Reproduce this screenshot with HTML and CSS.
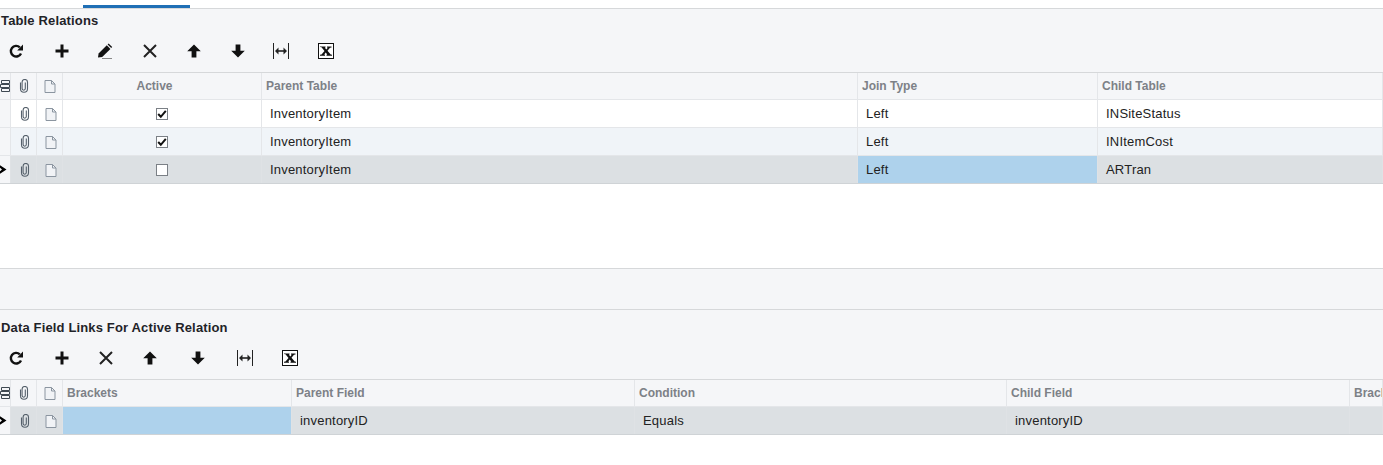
FILE: index.html
```html
<!DOCTYPE html>
<html lang="en">
<head>
<meta charset="utf-8">
<title>Table Relations</title>
<link rel="stylesheet" href="styles.css">
</head>
<body>
<svg class="defs" width="0" height="0" aria-hidden="true">
  <symbol id="i-refresh" viewBox="0 0 16 16"><path d="M13 10.400A5.300 5.300 0 1 1 11.800 4.300" fill="none" stroke="#111" stroke-width="2.400"/><path d="M9.200 7.400h5.800V1.600z" fill="#111"/></symbol>
  <symbol id="i-plus" viewBox="0 0 16 16"><path d="M6.500 1.500h3v5h5v3h-5v5h-3v-5h-5v-3h5z" fill="#111"/></symbol>
  <symbol id="i-edit" viewBox="0 0 16 16"><path d="M1 14.500l.6-4L9.800 2.300l3.600 3.600-8.200 8.200z" fill="#111"/><path d="M10.600 1.500l1-1 3.600 3.600-1 1z" fill="#111"/><path d="M5 15.500h10" stroke="#888" stroke-width="1"/></symbol>
  <symbol id="i-x" viewBox="0 0 16 16"><path d="M2 2l12 12M14 2L2 14" stroke="#222" stroke-width="2" fill="none"/></symbol>
  <symbol id="i-up" viewBox="0 0 16 16"><path d="M8 1.500l6.800 6.800H10.400v6.200H5.600V8.300H1.200z" fill="#111"/></symbol>
  <symbol id="i-down" viewBox="0 0 16 16"><path d="M8 14.500l6.800-6.800H10.400V1.500H5.600v6.200H1.200z" fill="#111"/></symbol>
  <symbol id="i-fit" viewBox="0 0 16 16"><path d="M.5 0v16M15.500 0v16" stroke="#222" stroke-width="1" fill="none"/><path d="M4 8h8" stroke="#222" stroke-width="1.600"/><path d="M2 8l3.500-3.500v7zM14 8l-3.500-3.500v7z" fill="#222"/></symbol>
  <symbol id="i-excel" viewBox="0 0 16 16"><rect x=".5" y=".5" width="15" height="15" fill="#fff" stroke="#111"/><path d="M2 3.500h5.500v1l-.6.200L8.300 6.600 9.800 4.700 9 4.500v-1h4.500v1l-1.500.3L9.500 7.800l3.200 3.700 1.300.200v1H8.500v-1l.7-.2-1.400-2-1.600 2 .8.200v1H2v-1l1.500-.2 3-3.500-3-3.800-1.500-.3z" fill="#111"/></symbol>
  <symbol id="i-clip" viewBox="0 0 10 14"><path d="M1.500 3.500v6.300a3.500 3.500 0 0 0 7 0V3.200a2.700 2.700 0 0 0-5.400-.1v6.500a1.600 1.600 0 0 0 3.200 0V3.500" fill="none" stroke="#55606b" stroke-width="1.100"/></symbol>
  <symbol id="i-doc" viewBox="0 0 12 14"><path d="M1 1.500h6.500L11 5v8.500H1z" fill="#f1f3f6" stroke="#8b95a0"/><path d="M7.500 1.500V5H11" fill="none" stroke="#8b95a0"/></symbol>
  <symbol id="i-list" viewBox="0 0 10 14"><path d="M1.500 1.500h8v3h-8zM.5 5.500h9v3h-9zM1.500 9.500h8v3h-8z" fill="none" stroke="#3f4952"/></symbol>
  <symbol id="i-caret" viewBox="0 0 7 9"><path d="M0 .2v2.600L2 4.500 0 6.200v2.600l6.500-4.300z" fill="#000"/></symbol>
  <symbol id="i-check" viewBox="0 0 10 10"><path d="M1.200 5l2.600 2.800L8.800 1.800" fill="none" stroke="#111" stroke-width="2"/></symbol>
</svg>

<div class="tabstrip"><span class="tab-active"></span></div>

<section class="panel">
  <h2 class="panel-title">Table Relations</h2>
  <div class="toolbar">
    <svg class="tb tb-1"><use href="#i-refresh"/></svg>
    <svg class="tb tb-2"><use href="#i-plus"/></svg>
    <svg class="tb tb-3"><use href="#i-edit"/></svg>
    <svg class="tb tb-4"><use href="#i-x"/></svg>
    <svg class="tb tb-5"><use href="#i-up"/></svg>
    <svg class="tb tb-6"><use href="#i-down"/></svg>
    <svg class="tb tb-7"><use href="#i-fit"/></svg>
    <svg class="tb tb-8"><use href="#i-excel"/></svg>
  </div>
</section>

<div class="grid grid-top">
  <div class="row head">
    <div class="c c-ind"><svg class="i-list"><use href="#i-list"/></svg></div>
    <div class="c c-ico"><svg class="i-clip"><use href="#i-clip"/></svg></div>
    <div class="c c-ico"><svg class="i-doc"><use href="#i-doc"/></svg></div>
    <div class="c c-center c-active-head">Active</div>
    <div class="c">Parent Table</div>
    <div class="c">Join Type</div>
    <div class="c">Child Table</div>
  </div>
  <div class="row">
    <div class="c c-ind"></div>
    <div class="c c-ico"><svg class="i-clip"><use href="#i-clip"/></svg></div>
    <div class="c c-ico"><svg class="i-doc"><use href="#i-doc"/></svg></div>
    <div class="c c-center"><span class="check"><svg class="i-check"><use href="#i-check"/></svg></span></div>
    <div class="c">InventoryItem</div>
    <div class="c">Left</div>
    <div class="c">INSiteStatus</div>
  </div>
  <div class="row alt">
    <div class="c c-ind"></div>
    <div class="c c-ico"><svg class="i-clip"><use href="#i-clip"/></svg></div>
    <div class="c c-ico"><svg class="i-doc"><use href="#i-doc"/></svg></div>
    <div class="c c-center"><span class="check"><svg class="i-check"><use href="#i-check"/></svg></span></div>
    <div class="c">InventoryItem</div>
    <div class="c">Left</div>
    <div class="c">INItemCost</div>
  </div>
  <div class="row current">
    <div class="c c-ind"><svg class="i-caret"><use href="#i-caret"/></svg></div>
    <div class="c c-ico"><svg class="i-clip"><use href="#i-clip"/></svg></div>
    <div class="c c-ico"><svg class="i-doc"><use href="#i-doc"/></svg></div>
    <div class="c c-center"><span class="check"></span></div>
    <div class="c">InventoryItem</div>
    <div class="c c-active">Left</div>
    <div class="c">ARTran</div>
  </div>
</div>

<div class="grid-space"></div>
<div class="splitter"></div>

<section class="panel panel-lower">
  <h2 class="panel-title">Data Field Links For Active Relation</h2>
  <div class="toolbar">
    <svg class="tb tb-1"><use href="#i-refresh"/></svg>
    <svg class="tb tb-2"><use href="#i-plus"/></svg>
    <svg class="tb tb-b3"><use href="#i-x"/></svg>
    <svg class="tb tb-b4"><use href="#i-up"/></svg>
    <svg class="tb tb-b5"><use href="#i-down"/></svg>
    <svg class="tb tb-b6"><use href="#i-fit"/></svg>
    <svg class="tb tb-b7"><use href="#i-excel"/></svg>
  </div>
</section>

<div class="grid grid-bottom">
  <div class="row head">
    <div class="c c-ind"><svg class="i-list"><use href="#i-list"/></svg></div>
    <div class="c c-ico"><svg class="i-clip"><use href="#i-clip"/></svg></div>
    <div class="c c-ico"><svg class="i-doc"><use href="#i-doc"/></svg></div>
    <div class="c">Brackets</div>
    <div class="c">Parent Field</div>
    <div class="c">Condition</div>
    <div class="c">Child Field</div>
    <div class="c">Brackets</div>
  </div>
  <div class="row current">
    <div class="c c-ind"><svg class="i-caret"><use href="#i-caret"/></svg></div>
    <div class="c c-ico"><svg class="i-clip"><use href="#i-clip"/></svg></div>
    <div class="c c-ico"><svg class="i-doc"><use href="#i-doc"/></svg></div>
    <div class="c c-active"></div>
    <div class="c">inventoryID</div>
    <div class="c">Equals</div>
    <div class="c">inventoryID</div>
    <div class="c"></div>
  </div>
</div>
</body>
</html>
```

FILE: styles.css
```css
* { box-sizing: border-box; margin: 0; padding: 0; }
html, body { height: 100%; overflow: hidden; }
body { background: #fff; font-family: "Liberation Sans", Arial, sans-serif; font-size: 13px; color: #222; }
.defs { position: absolute; }

.tabstrip { height: 9px; border-bottom: 1px solid #d6d8da; padding-left: 83px; display: flex; align-items: flex-end; }
.tab-active { display: block; width: 107px; height: 3px; background: #1f6fb5; }

.panel { background: #f5f6f8; height: 63px; display: flex; flex-direction: column; }
.panel-lower { height: 69px; padding-top: 6px; }
.panel-title { font-size: 13px; font-weight: bold; line-height: 14px; padding: 5px 0 0 1px; color: #1f2328; letter-spacing: .15px; }
.toolbar { position: relative; flex: 1; }
.tb { position: absolute; top: 15px; width: 16px; height: 16px; }
.tb-1 { left: 8px; } .tb-2 { left: 54px; } .tb-3 { left: 97px; } .tb-4 { left: 142px; }
.tb-5 { left: 186px; } .tb-6 { left: 230px; } .tb-7 { left: 273px; } .tb-8 { left: 318px; }
.tb-b3 { left: 98px; } .tb-b4 { left: 142px; } .tb-b5 { left: 190px; } .tb-b6 { left: 237px; } .tb-b7 { left: 282px; }

.row { display: grid; height: 28px; border-bottom: 1px solid #e4e6e9; align-items: stretch; }
.grid-top .row { grid-template-columns: 11px 26px 26px 199px 596px 240px 1fr; }
.grid-bottom .row { grid-template-columns: 11px 26px 26px 229px 343px 372px 343px 1fr; }
.c { display: flex; align-items: center; padding-left: 8px; border-right: 1px solid #e4e6e9; line-height: 14px; letter-spacing: .2px; white-space: nowrap; overflow: hidden; min-width: 0; }
.c-ind { padding: 0; background: #f5f6f8; overflow: visible; }
.c-ico { padding: 0 0 0 2px; justify-content: center; }
.c-center { padding: 0; justify-content: center; }

.head { background: #f5f6f8; border-top: 1px solid #d6d8da; color: #7d8187; font-weight: bold; font-size: 12px; letter-spacing: 0; }
.head .c { padding-left: 4px; letter-spacing: 0; }
.head .c-ind { padding: 0; }
.head .c-ico { padding: 0; }
.head .c-center { padding: 0 15px 0 0; }
.alt { background: #f0f4f8; }
.current { background: #dce0e3; border-bottom: 1px solid #cfd3d6; }
.current .c { border-right-color: #dfe2e5; }
.current .c-ind { background: #f5f6f8; }
.c-active { background: #aed2ec; }

.i-clip { width: 10px; height: 14px; }
.i-doc { width: 12px; height: 14px; }
.i-list { width: 10px; height: 14px; }
.i-caret { width: 7px; height: 9px; }
.i-check { display: block; width: 10px; height: 10px; }

.check { display: block; width: 12px; height: 12px; background: #fff; border: 1px solid #7b8086; }

.grid-space { height: 84px; }
.splitter { height: 42px; background: #f5f6f8; border-top: 1px solid #d6d8da; border-bottom: 1px solid #d6d8da; }
```
